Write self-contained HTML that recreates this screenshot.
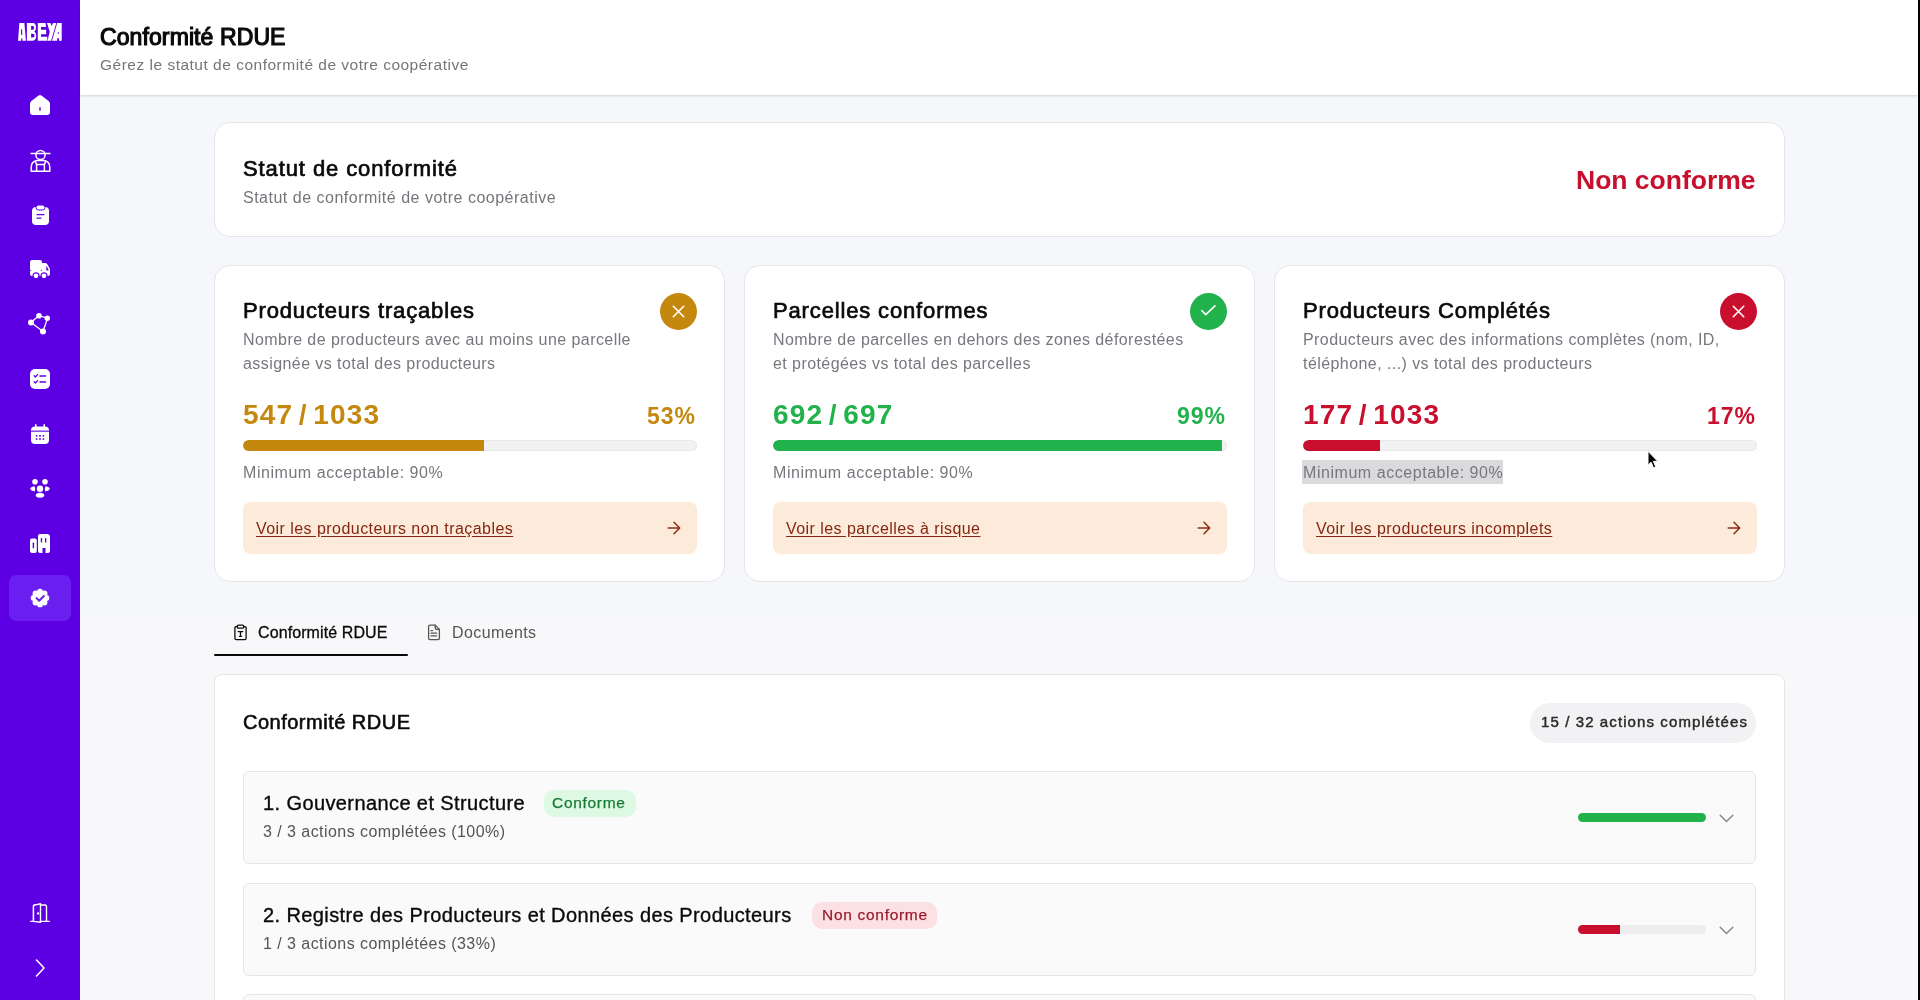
<!DOCTYPE html>
<html lang="fr">
<head>
<meta charset="utf-8">
<style>
*{box-sizing:border-box;margin:0;padding:0}
html,body{width:1920px;height:1000px;overflow:hidden}
.t,.badge{will-change:transform}
body{font-family:"Liberation Sans",sans-serif;background:linear-gradient(#F6F7FB 0,#F6F7FB 619px,#F8F8FA 619px,#F8F8FA 1000px);position:relative;color:#0A0A0A}
#side{position:absolute;left:0;top:0;width:80px;height:1000px;background:#5C00E3}
#edge{position:absolute;left:1918px;top:0;width:2px;height:1000px;background:#000}
#hdr{position:absolute;left:80px;top:0;width:1838px;height:95px;background:#fff;box-shadow:0 1px 3px rgba(0,0,0,.10),0 1px 2px rgba(0,0,0,.06)}
.card{position:absolute;background:#fff;border:1px solid #E6E6EA;border-radius:16px}
.t{position:absolute;white-space:nowrap;line-height:1}
.sb{position:absolute;left:0;width:80px;display:flex;justify-content:center;align-items:center}
.sb svg{display:block}
.kc{top:265px;width:511px;height:317px}
.kc .ttl{left:28px;top:34px;font-size:22px;font-weight:400;color:#0A0A0A;-webkit-text-stroke:0.7px #0A0A0A;letter-spacing:0.85px}
.kc .ds{left:28px;top:61.5px;font-size:16px;color:#77777E;line-height:24px;letter-spacing:0.43px}
.kc .num{left:28px;top:134.5px;font-size:28px;font-weight:700;letter-spacing:1.2px;word-spacing:-3.5px}
.kc .pct{right:28px;top:139px;font-size:23px;font-weight:700;letter-spacing:1px}
.kc .bar{position:absolute;left:28px;top:174px;width:454px;height:11px;border-radius:6px;background:#F2F2F3;box-shadow:inset 0 0 0 1px #E9E9EB;overflow:hidden}
.kc .bar i{display:block;height:100%;border-radius:6px 0 0 6px}
.kc .min{left:28px;top:199px;font-size:16px;color:#77777E;letter-spacing:0.55px}
.kc .lnk{position:absolute;left:28px;top:236px;width:454px;height:52px;border-radius:8px;background:#FCEBDA}
.kc .lnk .t{left:13px;top:19px;font-size:16px;color:#862612;text-decoration:underline;text-underline-offset:2px;letter-spacing:0.45px}
.kc .ic{position:absolute;left:445px;top:27px;width:37px;height:37px;border-radius:50%}
.item{position:absolute;left:28px;width:1513px;height:93px;background:#FAFAFB;border:1px solid #E5E5E8;border-radius:6px}
.item .it{left:19px;top:20.5px;font-size:20px;color:#0A0A0A;letter-spacing:0.4px;-webkit-text-stroke:0.35px #0A0A0A}
.item .is{left:19px;top:52px;font-size:16px;color:#555;letter-spacing:0.45px}
.badge{position:absolute;top:17.5px;height:27px;border-radius:10px;font-size:15.5px;line-height:26px;letter-spacing:0.7px;padding:0 0 0 8px;-webkit-text-stroke:0.25px currentColor}
.item .pb{position:absolute;left:1334px;top:41px;width:128px;height:9px;border-radius:5px;background:#EDEDF0;overflow:hidden}
.item .pb i{display:block;height:100%}
.item .chev{position:absolute;left:1475px;top:41.5px}
</style>
</head>
<body>
<div id="side"></div>
<!-- sidebar icons -->
<svg style="position:absolute;left:18px;top:23px" width="44" height="18" viewBox="0 0 44 18">
  <path fill="#fff" fill-rule="evenodd" d="M1.4 0H6.4L7.9 17.7H4.5L4.3 15.3H3.4L3.2 17.7H0Z M3.1 6.2H4.1L4.3 11.8H3Z"/>
  <path fill="#fff" fill-rule="evenodd" d="M8.9 0H14.6C16.9 0 18 1.5 18 4.2C18 6.3 17.3 7.8 16.2 8.6C17.5 9.3 18.2 10.8 18.2 13C18.2 16.2 16.8 17.7 14.3 17.7H8.9Z M13.1 3.1V6.8H14.2C15.6 6.8 16.1 6.2 16.1 5C16.1 3.7 15.6 3.1 14.2 3.1Z M13.1 10.7V14.6H14.4C15.9 14.6 16.6 13.9 16.6 12.6C16.6 11.4 15.9 10.7 14.4 10.7Z"/>
  <path fill="#fff" d="M19.8 0H27.6L28 3.9H23V6.8H28.2V11.2H23V13.8H29.3V17.7H19.8Z"/>
  <path fill="#fff" d="M29 0H32.4L33.6 3L35 0H38.3L33.1 17.7H29.5L31.7 8.8Z"/>
  <path fill="#fff" fill-rule="evenodd" d="M39.2 0H43.7V17.7H41L40.9 15.2H39.2L39.1 17.7H34Z M40.4 9.2A.8 .8 0 1 0 40.4 10.8A.8 .8 0 1 0 40.4 9.2Z"/>
</svg>
<svg style="position:absolute;left:30px;top:95px" width="20" height="20" viewBox="0 0 20 20">
  <path fill="#fff" d="M8.6 0.6Q10 -0.4 11.4 0.6L18.6 5.9Q20 6.9 20 8.6V17Q20 20 17 20H3Q0 20 0 17V8.6Q0 6.9 1.4 5.9Z"/>
  <rect x="9.3" y="12" width="1.4" height="4" rx=".7" fill="#5C00E3"/>
</svg>
<svg style="position:absolute;left:29.5px;top:147.5px" width="21" height="24" viewBox="0 0 21 24" fill="none" stroke="#fff" stroke-width="1.5" stroke-linejoin="round">
  <circle cx="10.5" cy="7" r="4.6"/>
  <path d="M0.5 5.5H20.5"/>
  <path d="M1.2 23.2V19.5Q1.2 13.6 6.8 12.6H14.2Q19.8 13.6 19.8 19.5V23.2Z"/>
  <path d="M6.6 16.4H14.4V23.2M6.6 16.4V23.2M6.6 16.4L5.2 13M14.4 16.4L15.8 13"/>
</svg>
<svg style="position:absolute;left:31.5px;top:204.5px" width="17" height="20" viewBox="0 0 17 20">
  <rect x="0" y="2" width="17" height="18" rx="4" fill="#fff"/>
  <rect x="4" y="0" width="9" height="5" rx="2.5" fill="#fff" stroke="#5C00E3" stroke-width="1"/>
  <rect x="4.5" y="9" width="8" height="1.3" rx=".6" fill="#5C00E3"/>
  <rect x="4.5" y="12.5" width="5" height="1.3" rx=".6" fill="#5C00E3"/>
</svg>
<svg style="position:absolute;left:30px;top:260px" width="20" height="19" viewBox="0 0 20 19">
  <rect x="0" y="0" width="12" height="11" rx="2" fill="#fff"/>
  <path fill="#fff" d="M12 3H15Q16.5 3 17.3 4.3L19.5 8Q20 8.8 20 10V14Q20 16 18 16H2Q0 16 0 14V11H12Z"/>
  <path fill="#5C00E3" d="M16.3 5.5L18.3 9.3V10.5H16.3Z"/>
  <circle cx="6" cy="15.8" r="3" fill="#fff" stroke="#5C00E3" stroke-width="1.2"/>
  <circle cx="14" cy="15.8" r="3" fill="#fff" stroke="#5C00E3" stroke-width="1.2"/>
</svg>
<svg style="position:absolute;left:28px;top:313px" width="22" height="22" viewBox="0 0 22 22" fill="#fff">
  <path d="M11 2.5L19.5 5.5L15 18.5L3 9.5Z" fill="none" stroke="#fff" stroke-width="1.3"/>
  <circle cx="11" cy="2.8" r="2.8"/>
  <circle cx="19.3" cy="5.3" r="2.7"/>
  <circle cx="3" cy="9.5" r="3"/>
  <circle cx="15" cy="18.5" r="3"/>
</svg>
<svg style="position:absolute;left:30px;top:369px" width="20" height="20" viewBox="0 0 20 20">
  <rect x="0" y="0" width="20" height="20" rx="5" fill="#fff"/>
  <path d="M4.2 6.8L5.4 8L7.6 5.6M4.2 12.8L5.4 14L7.6 11.6" fill="none" stroke="#5C00E3" stroke-width="1.3" stroke-linecap="round" stroke-linejoin="round"/>
  <path d="M10 6.9H15.5M10 12.9H15.5" stroke="#5C00E3" stroke-width="1.5" stroke-linecap="round"/>
</svg>
<svg style="position:absolute;left:31px;top:423.5px" width="18" height="20" viewBox="0 0 18 20">
  <rect x="0" y="2.5" width="18" height="17.5" rx="4" fill="#fff"/>
  <rect x="4" y="0" width="1.6" height="4" rx=".8" fill="#fff"/>
  <rect x="12.4" y="0" width="1.6" height="4" rx=".8" fill="#fff"/>
  <rect x="0" y="6.6" width="18" height="1.1" fill="#5C00E3"/>
  <g fill="#5C00E3"><rect x="4.8" y="11" width="1.6" height="1.6"/><rect x="8.2" y="11" width="1.6" height="1.6"/><rect x="11.6" y="11" width="1.6" height="1.6"/><rect x="4.8" y="14.2" width="1.6" height="1.6"/><rect x="8.2" y="14.2" width="1.6" height="1.6"/><rect x="11.6" y="14.2" width="1.6" height="1.6"/></g>
</svg>
<svg style="position:absolute;left:30px;top:479px" width="20" height="20" viewBox="0 0 20 20" fill="#fff">
  <circle cx="5" cy="2.8" r="2.8"/><circle cx="15" cy="2.8" r="2.8"/>
  <circle cx="10" cy="9.8" r="3.2"/>
  <path d="M4.6 7.2Q1 7.4 0 9.8Q1 12.2 4.6 12.4Q5.8 9.8 4.6 7.2Z"/>
  <path d="M15.4 7.2Q19 7.4 20 9.8Q19 12.2 15.4 12.4Q14.2 9.8 15.4 7.2Z"/>
  <ellipse cx="10" cy="16.3" rx="4.2" ry="2.5"/>
</svg>
<svg style="position:absolute;left:30px;top:534px" width="20" height="19" viewBox="0 0 20 19">
  <rect x="0" y="4.5" width="6.8" height="14.5" rx="2" fill="#fff"/>
  <rect x="2.7" y="8.5" width="1.4" height="6" rx=".7" fill="#5C00E3"/>
  <path fill="#fff" d="M10 0H17Q20 0 20 3V17Q20 19 18 19H15.5V14H12.5V19H10Q8 19 8 17V2Q8 0 10 0Z"/>
  <rect x="10.8" y="4" width="1.3" height="4.5" rx=".6" fill="#5C00E3"/>
  <rect x="15" y="4" width="1.3" height="4.5" rx=".6" fill="#5C00E3"/>
</svg>
<div style="position:absolute;left:9px;top:575px;width:62px;height:46px;border-radius:7px;background:#6A1EF0"></div>
<svg style="position:absolute;left:29.5px;top:588px" width="20" height="20" viewBox="0 0 20 20">
  <g fill="#fff"><circle cx="10" cy="10" r="7.5"/><circle cx="16.40" cy="10.00" r="2.9"/><circle cx="14.53" cy="14.53" r="2.9"/><circle cx="10.00" cy="16.40" r="2.9"/><circle cx="5.47" cy="14.53" r="2.9"/><circle cx="3.60" cy="10.00" r="2.9"/><circle cx="5.47" cy="5.47" r="2.9"/><circle cx="10.00" cy="3.60" r="2.9"/><circle cx="14.53" cy="5.47" r="2.9"/></g>
  <path d="M6.6 10.1L9.2 12.7L13.9 8" fill="none" stroke="#6A1EF0" stroke-width="2" stroke-linecap="round" stroke-linejoin="round"/>
</svg>
<svg style="position:absolute;left:30px;top:903px" width="20" height="20" viewBox="0 0 20 20" fill="none" stroke="#fff" stroke-width="1.4" stroke-linejoin="round" stroke-linecap="round">
  <path d="M0.7 18.4H19.3"/>
  <path d="M3.5 18.4V3.5Q3.5 2 5 2H15Q16.5 2 16.5 3.5V18.4"/>
  <path d="M3.5 2.4L10.5 0.7V19.3L3.5 18.4Z" fill="#5C00E3"/>
  <circle cx="8.1" cy="10.4" r=".5" fill="#fff"/>
</svg>
<svg style="position:absolute;left:34px;top:959px" width="12" height="18" viewBox="0 0 12 18" fill="none" stroke="#fff" stroke-width="1.5" stroke-linecap="round" stroke-linejoin="round">
  <path d="M2.5 1L10 9L2.5 17"/>
</svg>


<div id="hdr">
  <div class="t" style="left:20px;top:25.5px;font-size:23px;font-weight:400;-webkit-text-stroke:1.2px #0A0A0A;letter-spacing:0.1px">Conformité RDUE</div>
  <div class="t" style="left:20px;top:56.5px;font-size:15.5px;color:#75757B;letter-spacing:0.5px">Gérez le statut de conformité de votre coopérative</div>
</div>

<div class="card" style="left:214px;top:122px;width:1571px;height:115px">
  <div class="t" style="left:28px;top:35px;font-size:22px;font-weight:400;-webkit-text-stroke:0.7px #0A0A0A;letter-spacing:0.9px">Statut de conformité</div>
  <div class="t" style="left:28px;top:66.5px;font-size:16px;color:#75757B;letter-spacing:0.5px">Statut de conformité de votre coopérative</div>
  <div class="t" style="right:28px;top:44px;font-size:26.5px;font-weight:700;color:#C8102E">Non conforme</div>
</div>

<!-- KPI cards -->
<div class="card kc" style="left:214px">
  <div class="t ttl">Producteurs traçables</div>
  <div class="t ds">Nombre de producteurs avec au moins une parcelle<br>assignée vs total des producteurs</div>
  <div class="ic" style="background:#C4880F"><svg style="position:absolute;left:12px;top:12px" width="13" height="13" viewBox="0 0 13 13"><path d="M1.3 1.3L11.7 11.7M11.7 1.3L1.3 11.7" stroke="#fff" stroke-width="1.6" stroke-linecap="round"/></svg></div>
  <div class="t num" style="color:#C4880F">547 / 1033</div>
  <div class="t pct" style="color:#C4880F">53%</div>
  <div class="bar"><i style="width:53%;background:#C4880F"></i></div>
  <div class="t min">Minimum acceptable: 90%</div>
  <div class="lnk"><div class="t">Voir les producteurs non traçables</div><svg style="position:absolute;left:424px;top:19px" width="14" height="14" viewBox="0 0 14 14"><path d="M1.2 7H12.5M7 1.3L12.7 7L7 12.7" fill="none" stroke="#8A2E14" stroke-width="1.5" stroke-linecap="round" stroke-linejoin="round"/></svg></div>
</div>
<div class="card kc" style="left:744px">
  <div class="t ttl">Parcelles conformes</div>
  <div class="t ds">Nombre de parcelles en dehors des zones déforestées<br>et protégées vs total des parcelles</div>
  <div class="ic" style="background:#22B24C"><svg style="position:absolute;left:10px;top:11px" width="17" height="13" viewBox="0 0 17 13"><path d="M1.7 6.5L5.7 10.6L15 1.8" fill="none" stroke="#fff" stroke-width="1.6" stroke-linecap="round" stroke-linejoin="round"/></svg></div>
  <div class="t num" style="color:#22B24C">692 / 697</div>
  <div class="t pct" style="color:#22B24C">99%</div>
  <div class="bar"><i style="width:99%;background:#22B24C"></i></div>
  <div class="t min">Minimum acceptable: 90%</div>
  <div class="lnk"><div class="t">Voir les parcelles à risque</div><svg style="position:absolute;left:424px;top:19px" width="14" height="14" viewBox="0 0 14 14"><path d="M1.2 7H12.5M7 1.3L12.7 7L7 12.7" fill="none" stroke="#8A2E14" stroke-width="1.5" stroke-linecap="round" stroke-linejoin="round"/></svg></div>
</div>
<div class="card kc" style="left:1274px">
  <div class="t ttl">Producteurs Complétés</div>
  <div class="t ds">Producteurs avec des informations complètes (nom, ID,<br>téléphone, ...) vs total des producteurs</div>
  <div class="ic" style="background:#C8102E"><svg style="position:absolute;left:12px;top:12px" width="13" height="13" viewBox="0 0 13 13"><path d="M1.3 1.3L11.7 11.7M11.7 1.3L1.3 11.7" stroke="#fff" stroke-width="1.6" stroke-linecap="round"/></svg></div>
  <div class="t num" style="color:#C8102E">177 / 1033</div>
  <div class="t pct" style="color:#C8102E">17%</div>
  <div class="bar"><i style="width:17%;background:#C8102E"></i></div>
  <div style="position:absolute;left:27px;top:194px;width:201px;height:24px;background:#DADADC"></div>
  <div class="t min">Minimum acceptable: 90%</div>
  <div class="lnk"><div class="t">Voir les producteurs incomplets</div><svg style="position:absolute;left:424px;top:19px" width="14" height="14" viewBox="0 0 14 14"><path d="M1.2 7H12.5M7 1.3L12.7 7L7 12.7" fill="none" stroke="#8A2E14" stroke-width="1.5" stroke-linecap="round" stroke-linejoin="round"/></svg></div>
</div>

<!-- tabs -->
<svg style="position:absolute;left:233px;top:624px" width="15" height="17" viewBox="0 0 15 17" fill="none" stroke="#0A0A0A" stroke-width="1.3" stroke-linejoin="round" stroke-linecap="round">
  <path d="M4.2 2.6H3.2Q1.9 2.6 1.9 3.9V14.3Q1.9 15.6 3.2 15.6H11.8Q13.1 15.6 13.1 14.3V3.9Q13.1 2.6 11.8 2.6H10.8"/>
  <rect x="4.3" y="1.2" width="6.4" height="3" rx="1.2"/>
  <path d="M5.2 7.6H9.8M7.5 7.6V12.4M6.5 12.4H8.5"/>
</svg>
<svg style="position:absolute;left:427px;top:624px" width="14" height="17" viewBox="0 0 14 17" fill="none" stroke="#555" stroke-width="1.3" stroke-linejoin="round" stroke-linecap="round">
  <path d="M8.2 1.2H3Q1.6 1.2 1.6 2.6V14.2Q1.6 15.6 3 15.6H11Q12.4 15.6 12.4 14.2V5.4Z"/>
  <path d="M8.2 1.2V4Q8.2 5.4 9.6 5.4H12.4"/>
  <path d="M4 6.6H5.6M4 9.2H9.6M4 11.9H9.6"/>
</svg>

<div class="t" style="left:258px;top:625px;font-size:16px;color:#0A0A0A;letter-spacing:0.1px;-webkit-text-stroke:0.3px #0A0A0A">Conformité RDUE</div>
<div class="t" style="left:452px;top:625px;font-size:16px;color:#555;letter-spacing:0.4px">Documents</div>
<div style="position:absolute;left:214px;top:654px;width:194px;height:2px;background:#0A0A0A;border-radius:1px"></div>

<!-- section card -->
<div class="card" style="left:214px;top:674px;width:1571px;height:400px;border-radius:8px">
  <div class="t" style="left:28px;top:37px;font-size:20px;color:#0A0A0A;letter-spacing:0.5px;-webkit-text-stroke:0.6px #0A0A0A">Conformité RDUE</div>
  <div style="position:absolute;left:1315px;top:28px;width:226px;height:40px;border-radius:20px;background:#F2F2F4"></div>
  <div class="t" style="left:1326px;top:39px;font-size:15px;font-weight:400;color:#2A2A2A;letter-spacing:1.1px;-webkit-text-stroke:0.45px #2A2A2A">15 / 32 actions complétées</div>

  <div class="item" style="top:96px">
    <div class="t it">1. Gouvernance et Structure</div>
    <div class="badge" style="left:299.5px;width:92px;background:#DDF9E3;color:#177A33">Conforme</div>
    <div class="t is">3 / 3 actions complétées (100%)</div>
    <div class="pb"><i style="width:100%;background:#22B24C"></i></div><svg class="chev" width="15" height="9" viewBox="0 0 15 9"><path d="M1.2 1.2L7.5 7.5L13.8 1.2" fill="none" stroke="#8A8A8A" stroke-width="1.5" stroke-linecap="round" stroke-linejoin="round"/></svg>
  </div>
  <div class="item" style="top:208px">
    <div class="t it">2. Registre des Producteurs et Données des Producteurs</div>
    <div class="badge" style="left:568px;width:125px;padding-left:10px;background:#FBE0E4;color:#9A1B2C">Non conforme</div>
    <div class="t is">1 / 3 actions complétées (33%)</div>
    <div class="pb"><i style="width:33%;background:#C8102E"></i></div><svg class="chev" width="15" height="9" viewBox="0 0 15 9"><path d="M1.2 1.2L7.5 7.5L13.8 1.2" fill="none" stroke="#8A8A8A" stroke-width="1.5" stroke-linecap="round" stroke-linejoin="round"/></svg>
  </div>
  <div class="item" style="top:319px"></div>
</div>

<svg style="position:absolute;left:1646px;top:450px" width="16" height="22" viewBox="0 0 16 22">
  <path d="M2 1.3V15.2L5.1 12.2L7.5 17.9L9.8 17L7.4 11.3H11.7Z" fill="#000" stroke="#fff" stroke-width="1" stroke-linejoin="round"/>
</svg>
<div id="edge"></div>
</body>
</html>
